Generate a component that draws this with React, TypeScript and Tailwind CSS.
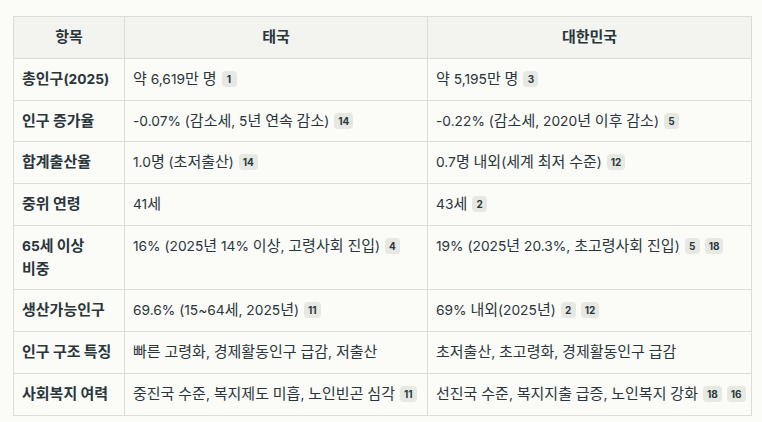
import React from "react";

const Badge = ({ n }: { n: string }) => (
  <span className="ml-[5px] inline-flex h-[16px] min-w-[15px] items-center justify-center rounded-[4px] bg-[#e8e8e3] px-[4px] align-[1px] text-[10px] font-bold leading-none text-[#2a3840]">
    {n}
  </span>
);

const Txt = ({ s }: { s: string }) => (
  <>
    {s.split(/([\uAC00-\uD7A3]+)/).map((p, i) =>
      /[\uAC00-\uD7A3]/.test(p) ? (
        <span key={i} className="text-[15px]">
          {p}
        </span>
      ) : (
        <React.Fragment key={i}>{p}</React.Fragment>
      )
    )}
  </>
);

type Cell = { text: string; badges?: string[] };
const rows: { label: string; th: Cell; kr: Cell }[] = [
  { label: "총인구(2025)", th: { text: "약 6,619만 명", badges: ["1"] }, kr: { text: "약 5,195만 명", badges: ["3"] } },
  { label: "인구 증가율", th: { text: "-0.07% (감소세, 5년 연속 감소)", badges: ["14"] }, kr: { text: "-0.22% (감소세, 2020년 이후 감소)", badges: ["5"] } },
  { label: "합계출산율", th: { text: "1.0명 (초저출산)", badges: ["14"] }, kr: { text: "0.7명 내외(세계 최저 수준)", badges: ["12"] } },
  { label: "중위 연령", th: { text: "41세" }, kr: { text: "43세", badges: ["2"] } },
  { label: "65세 이상 비중", th: { text: "16% (2025년 14% 이상, 고령사회 진입)", badges: ["4"] }, kr: { text: "19% (2025년 20.3%, 초고령사회 진입)", badges: ["5", "18"] } },
  { label: "생산가능인구", th: { text: "69.6% (15~64세, 2025년)", badges: ["11"] }, kr: { text: "69% 내외(2025년)", badges: ["2", "12"] } },
  { label: "인구 구조 특징", th: { text: "빠른 고령화, 경제활동인구 급감, 저출산" }, kr: { text: "초저출산, 초고령화, 경제활동인구 급감" } },
  { label: "사회복지 여력", th: { text: "중진국 수준, 복지제도 미흡, 노인빈곤 심각", badges: ["11"] }, kr: { text: "선진국 수준, 복지지출 급증, 노인복지 강화", badges: ["18", "16"] } },
];

const CellView = ({ c }: { c: Cell }) => (
  <td className="whitespace-nowrap border border-[#dcdcd4] px-[8px] py-[9px] align-top">
    <Txt s={c.text} />
    {c.badges?.map((b) => (
      <Badge key={b} n={b} />
    ))}
  </td>
);

export default function App() {
  return (
    <div
      className="min-h-[422px] w-[762px] bg-[#fbfbf8] pl-[13px] pr-[10px] pt-[16px] text-[13.75px] leading-[22.75px] text-[#29363c]"
      style={{ fontFamily: 'Inter, "Noto Sans CJK KR", sans-serif' }}
    >
      <table className="w-[739px] table-fixed border-collapse">
        <colgroup>
          <col className="w-[111px]" />
          <col className="w-[303px]" />
          <col />
        </colgroup>
        <thead>
          <tr className="bg-[#f3f3ef]">
            <th className="border border-[#dcdcd4] px-[8px] py-[9px] font-semibold">
              <Txt s="항목" />
            </th>
            <th className="border border-[#dcdcd4] px-[8px] py-[9px] font-semibold">
              <Txt s="태국" />
            </th>
            <th className="border border-[#dcdcd4] px-[8px] py-[9px] font-semibold">
              <Txt s="대한민국" />
            </th>
          </tr>
        </thead>
        <tbody>
          {rows.map((r) => (
            <tr key={r.label}>
              <td className="break-keep border border-[#dcdcd4] py-[9px] pl-[8px] pr-[10px] align-top font-bold">
                <Txt s={r.label} />
              </td>
              <CellView c={r.th} />
              <CellView c={r.kr} />
            </tr>
          ))}
        </tbody>
      </table>
    </div>
  );
}
